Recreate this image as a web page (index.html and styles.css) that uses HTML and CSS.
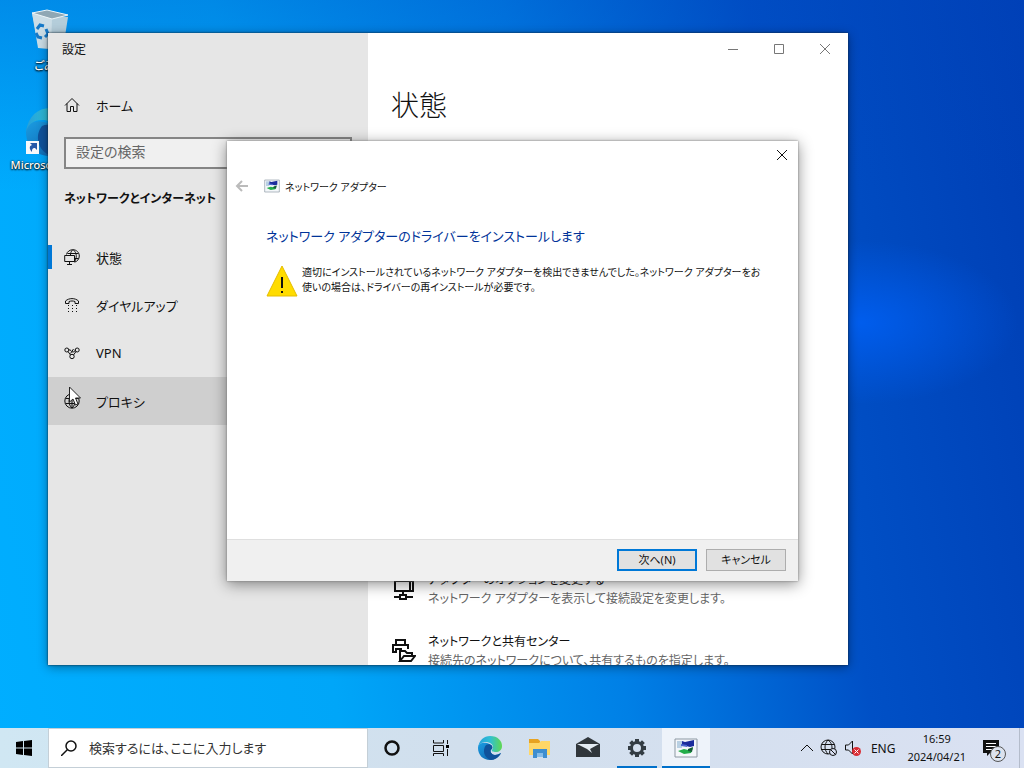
FILE: index.html
```html
<!DOCTYPE html>
<html lang="ja">
<head>
    <meta charset="UTF-8">
    <meta name="viewport" content="width=device-width, initial-scale=1.0">
    <title>設定</title>
    <link rel="stylesheet" href="styles.css">
</head>
<body>
    <svg class="defs" width="0" height="0" aria-hidden="true">
        <defs>
            <linearGradient id="edgeBlue" x1="0" y1="0" x2="1" y2="1">
                <stop offset="0" stop-color="#1b9de2"/>
                <stop offset="1" stop-color="#0c59a4"/>
            </linearGradient>
            <linearGradient id="edgeGreen" x1="0" y1="0" x2="1" y2="0">
                <stop offset="0" stop-color="#259fdc"/>
                <stop offset="0.5" stop-color="#30bfd4"/>
                <stop offset="1" stop-color="#60d850"/>
            </linearGradient>
            <symbol id="edge" viewBox="0 0 24 24">
                <path fill="url(#edgeBlue)" d="M0 12C0 7 5 6 9 7c4 1 6 4 5 6-3 1-1 6 3 6 2 0 4-1 6-2-2 4-6 7-11 7C5 24 0 19 0 12z"/>
                <path fill="#0f529b" d="M8 9c4-2 8 1 6 4-3 1-1 6 3 6 2 0 4-1 6-2-2 4-6 7-10 7C6 22 4 14 8 9z"/>
                <path fill="url(#edgeGreen)" d="M0 12C1 4 6 0 12 0c8 0 12 5 12 10 0 4-3 6-6 6s-5-1-4-2c3-4-1-8-6-8-4 0-7 2-8 6z"/>
            </symbol>
            <symbol id="adapter" viewBox="0 0 24 20">
                <path fill="#f4f7fa" stroke="#8d98a3" d="M1 1h22v18H1z"/>
                <path fill="#b9d0e3" d="M3 3h5v7H3z"/>
                <path fill="#1b2c9c" d="M8 3l3 1 9-2v6l-4 1-8-2z"/>
                <path fill="#4d69cf" d="M7 6l6 1v2l-6-1z"/>
                <path fill="#22ad49" d="M4 13l6-2 4 1 5-2-2 5-7 1z"/>
                <path fill="#145b35" d="M14 11l5-2-1 5-4-1z"/>
            </symbol>
        </defs>
    </svg>

    <main class="desktop">
        <a class="shortcut trash" href="#">
            <svg viewBox="0 0 40 42" width="40" height="42">
                <path fill="#b4cdda" d="M2 4l36 4-5 32-24-1z"/>
                <path fill="#cbdde6" d="M2 4l20 5-1 31-13-1z"/>
                <path fill="#8fa7b4" stroke="#edf5f8" d="M2 4l15-3 21 5-16 4z"/>
                <path fill="none" stroke="#1679c8" stroke-width="3" d="M7 20l3-4 4 1M16 20l2 5-3 3M12 29l-4-1-2-4"/>
            </svg>
            <span>ごみ箱</span>
        </a>
        <a class="shortcut browser" href="#">
            <svg viewBox="0 0 48 48" width="48" height="48">
                <use href="#edge" width="48" height="48"/>
                <path fill="#f7f9fb" d="M0 33h13v13H0z"/>
                <path fill="#2558a8" d="M4 35h7v7l-2-2c-3 0-3 2-3 4-3-3-3-6 0-7z"/>
            </svg>
            <span>Microsoft Edge</span>
        </a>

        <section class="window settings">
            <aside class="sidebar">
                <div class="window-title">設定</div>
                <a class="nav-item home" href="#">
                    <svg viewBox="0 0 16 16"><path d="M1 8.500l7-7 7 7M3 6.500V14.500h3.500V9.500h3v5H13V6.500"/></svg>
                    <span>ホーム</span>
                </a>
                <input class="search" type="text" placeholder="設定の検索" aria-label="設定の検索">
                <h2>ネットワークとインターネット</h2>
                <nav>
                    <a class="nav-item active" href="#">
                        <svg viewBox="0 0 16 16"><path d="M2.500 5.500C3 2.500 6 .7 9 .7c3.500 0 6.300 2.800 6.300 6.300 0 3-2 5.500-4.800 6.200M3.500 4.500h11M10.500 9.500h4M8.500 1C7 2.500 6.500 4 6.500 6M9.500 1c3.500 3 3.500 8 1 12M.7 6.500h9.800v6H.7zM5.500 12.500v3M3 15.500h5"/></svg>
                        <span>状態</span>
                    </a>
                    <a class="nav-item" href="#">
                        <svg viewBox="0 0 16 16"><path d="M1.500 6.500V4C5 .8 11 .8 14.500 4v2.500h-3.500V4.500C9 3.800 7 3.800 5 4.500v2z"/><path class="dots" d="M4 8.500h9M4 11.500h9M4 14.500h9"/></svg>
                        <span>ダイヤルアップ</span>
                    </a>
                    <a class="nav-item" href="#">
                        <svg viewBox="0 0 16 16"><circle cx="2.800" cy="5" r="2"/><circle cx="13.200" cy="5" r="2"/><circle cx="8" cy="11.500" r="2.200"/><path d="M4 6.500l2.500 3.500M12 6.500L9.500 10M4.800 5c2-1 2.500 2 4 2s2.500-1 2.500-2.500M6.500 8.500L9.500 4"/></svg>
                        <span>VPN</span>
                    </a>
                    <a class="nav-item hover" href="#">
                        <svg viewBox="0 0 16 16"><circle cx="8" cy="8" r="7.200"/><path d="M1.500 5.500h13M1.500 10.500h13M8 1v14M8 1C4 4 4 12 8 15M8 1c4 3 4 11 0 14"/></svg>
                        <span>プロキシ</span>
                    </a>
                </nav>
            </aside>
            <div class="content">
                <div class="window-controls">
                    <button aria-label="最小化"><svg viewBox="0 0 12 12"><path d="M1 6.500h10"/></svg></button>
                    <button aria-label="最大化"><svg viewBox="0 0 12 12"><path d="M1.500 1.500h9v9h-9z"/></svg></button>
                    <button aria-label="閉じる"><svg viewBox="0 0 12 12"><path d="M1 1l10 10M11 1L1 11"/></svg></button>
                </div>
                <h1>状態</h1>
                <div class="options">
                    <a class="option" href="#">
                        <svg viewBox="0 0 24 24"><path d="M3 4h15v10H3zM18 4h3v10h-3M11 14v4M2 20h6M14 20h7M8 18h6v4H8z"/></svg>
                        <span><strong>アダプターのオプションを変更する</strong><small>ネットワーク アダプターを表示して接続設定を変更します。</small></span>
                    </a>
                    <a class="option" href="#">
                        <svg viewBox="0 0 24 24"><path d="M4 6V1h9v5M5 13H1V6h15v4M4 13V10h6M8 22V12h5l2 2h5v3M8 22l4-5h11l-4 5z"/></svg>
                        <span><strong>ネットワークと共有センター</strong><small>接続先のネットワークについて、共有するものを指定します。</small></span>
                    </a>
                </div>
            </div>
        </section>

        <section class="window dialog" role="dialog" aria-labelledby="dialogTitle">
            <button class="close" aria-label="閉じる"><svg viewBox="0 0 12 12"><path d="M1 1l10 10M11 1L1 11"/></svg></button>
            <header>
                <button class="back" aria-label="戻る" disabled><svg viewBox="0 0 14 12"><path d="M13 6H2M7 1L2 6l5 5"/></svg></button>
                <svg class="adapter-icon"><use href="#adapter"/></svg>
                <span id="dialogTitle">ネットワーク アダプター</span>
            </header>
            <div class="dialog-body">
                <h2>ネットワーク アダプターのドライバーをインストールします</h2>
                <div class="message">
                    <svg viewBox="0 0 32 32"><path fill="#ffdc00" stroke="#e5bd00" d="M16 1l15 30H1z"/><path fill="#111" d="M15 12h2v11h-2zM15 26h2v2h-2z"/></svg>
                    <p>適切にインストールされているネットワーク アダプターを検出できませんでした。ネットワーク アダプターをお<br>使いの場合は、ドライバーの再インストールが必要です。</p>
                </div>
            </div>
            <footer>
                <button class="btn primary">次へ(N)</button>
                <button class="btn">キャンセル</button>
            </footer>
        </section>

        <svg class="cursor" viewBox="0 0 12 20" width="12" height="20"><path fill="#fff" stroke="#222" d="M.5 1v15l3.500-3 2.500 6 2.500-1-2.500-6h5z"/></svg>
    </main>

    <footer class="taskbar">
        <button class="start" aria-label="スタート"><svg viewBox="0 0 16 16" width="16" height="16"><path d="M0 2l7-1v6.500H0zM8 1l8-1v7.500H8zM0 8.500h7V15l-7-1zM8 8.500h8V16l-8-1z"/></svg></button>
        <label class="task-search">
            <svg viewBox="0 0 16 16" width="16" height="16"><circle cx="10" cy="6" r="5"/><path d="M6.500 9.500L0 16"/></svg>
            <input type="text" placeholder="検索するには、ここに入力します" aria-label="検索">
        </label>
        <div class="apps">
            <button aria-label="Cortana"><svg viewBox="0 0 24 24"><circle class="ring" cx="12" cy="12" r="6.500"/></svg></button>
            <button aria-label="タスク ビュー"><svg viewBox="0 0 24 24"><path class="line" d="M4.500 4v3h10V4M4.500 9.500h10v6h-10zM4.500 20v-2.500h10V20M18.500 4v4M18.500 13v7"/><path d="M17 9h3v3h-3z"/></svg></button>
            <button aria-label="Microsoft Edge"><svg><use href="#edge"/></svg></button>
            <button aria-label="エクスプローラー"><svg viewBox="0 0 24 24"><path fill="#e7a321" d="M2 3h9l2 2v4H2z"/><path fill="#ffd767" d="M2 7h10l2-2h9v14H2z"/><path fill="#3e8ed0" d="M6 13h14v9h-4v-5h-6v5H6z"/><path fill="#86bce8" d="M10 17h6v4h-6z"/></svg></button>
            <button aria-label="メール"><svg viewBox="0 0 24 24"><path fill="#30363b" d="M0 8l12-7 12 7v13H0z"/><path fill="#e3ebf2" d="M1 8h22l-9 5 2 4-5-4z"/></svg></button>
            <button class="open" aria-label="設定"><svg viewBox="0 0 24 24"><circle cx="12" cy="12" r="5.500" fill="none" stroke="#333c43" stroke-width="3"/><path class="gear" d="M12 3v3M12 18v3M3 12h3M18 12h3M5.600 5.600l2.200 2.200M16.200 16.200l2.200 2.200M5.600 18.400l2.200-2.200M16.200 7.800l2.200-2.200"/></svg></button>
            <button class="open current" aria-label="ネットワーク アダプター"><svg><use href="#adapter"/></svg></button>
        </div>
        <div class="tray">
            <button class="chevron" aria-label="隠れているインジケーター"><svg viewBox="0 0 14 16"><path d="M1 11l6-6 6 6"/></svg></button>
            <svg viewBox="0 0 18 18"><circle cx="8" cy="8" r="7"/><path d="M1.500 5.500h13M1 10.500h14M8 1C4 5 4 11 8 15M8 1c4 3 4 6 4 9"/><circle class="badge" cx="13" cy="13" r="3.500"/><path d="M10.500 10.500l5 5"/></svg>
            <svg viewBox="0 0 18 18"><path d="M1.500 6h3l4-4v13l-4-4h-3z"/><circle cx="12.500" cy="12.500" r="4.500" fill="#d92d35" stroke="none"/><path stroke="#fff" d="M10.500 10.500l4 4M14.500 10.500l-4 4"/></svg>
            <span class="lang">ENG</span>
            <time datetime="2024-04-21T16:59">16:59<br>2024/04/21</time>
            <button class="notice" aria-label="通知">
                <svg viewBox="0 0 18 18"><path fill="#111" stroke="none" d="M1 1h16v13H8l-3 3v-3H1z"/><path stroke="#fff" d="M4 4.500h10M4 7.500h10M4 10.500h6"/></svg>
                <span>2</span>
            </button>
        </div>
        <button class="show-desktop" aria-label="デスクトップの表示"></button>
    </footer>
</body>
</html>
```

FILE: styles.css
```css
* {
    box-sizing: border-box;
}
body {
    margin: 0;
    height: 100vh;
    display: grid;
    grid-template-rows: 1fr 40px;
    overflow: hidden;
    font-family: "Noto Sans", "Noto Sans CJK JP", sans-serif;
    font-feature-settings: "palt";
    font-size: 14px;
    color: #111;
    background:
        radial-gradient(ellipse at 84% 42%, rgba(0, 100, 255, 0.7), transparent 13%),
        linear-gradient(to bottom, rgba(0, 70, 190, 0.3), transparent 25%),
        linear-gradient(80deg, #00aeff 0%, #00a6f8 30%, #0080e6 55%, #0050c6 76%, #003eb4 100%);
}
a {
    color: inherit;
    text-decoration: none;
}
button, input {
    font: inherit;
    font-feature-settings: inherit;
    color: inherit;
}
button {
    padding: 0;
    border: 0;
    background: none;
}
h1, h2, p {
    margin: 0;
}
svg {
    flex: none;
}
.defs {
    position: absolute;
}
.desktop {
    position: relative;
    min-height: 0;
}
/* Desktop icons */
.shortcut {
    position: absolute;
    width: 100px;
    left: 0;
    display: flex;
    flex-direction: column;
    align-items: center;
    color: #fff;
    font-size: 11px;
    font-weight: 500;
    line-height: 16px;
    text-shadow: 0 1px 2px #000, 0 0 2px #000;
}
.trash {
    top: 9px;
    gap: 7px;
}
.browser {
    top: 108px;
    gap: 1px;
}
/* Windows */
.window {
    position: absolute;
    background: #fff;
}
.settings {
    inset: 33px 176px 63px 48px;
    display: grid;
    grid-template-columns: 320px 1fr;
    overflow: hidden;
    box-shadow: 0 0 2px #123, 0 2px 10px rgba(0, 0, 0, 0.4);
}
.sidebar {
    background: #e6e6e6;
}
.window-title {
    padding: 8px 14px;
    font-size: 12px;
    line-height: 18px;
}
.nav-item {
    display: flex;
    align-items: center;
    gap: 16px;
    height: 48px;
    padding: 0 16px;
    font-size: 13px;
}
.nav-item svg {
    width: 16px;
    height: 16px;
    fill: none;
    stroke: #111;
}
.nav-item .dots {
    stroke-dasharray: 1 3;
}
.home {
    margin-top: 14px;
}
.search {
    display: block;
    width: 288px;
    height: 32px;
    margin: 8px 16px 0;
    padding: 0 10px 4px;
    border: 2px solid #858585;
    background: #f0f0f0;
}
input::placeholder {
    color: #666;
    opacity: 1;
}
.sidebar h2 {
    margin: 18px 16px 22px;
    font-size: 12px;
    line-height: 24px;
}
.active {
    background: linear-gradient(#0078d7, #0078d7) left center / 4px 24px no-repeat;
}
.hover {
    background: #cfcfcf;
}
.content {
    display: flex;
    flex-direction: column;
    min-width: 0;
}
.window-controls {
    display: flex;
    justify-content: flex-end;
    height: 32px;
}
.window-controls button {
    width: 46px;
}
.window-controls svg, .close svg {
    width: 12px;
    height: 12px;
    fill: none;
    stroke: #777;
}
.content h1 {
    margin: 19px 23px 21px;
    font-size: 28px;
    font-weight: 300;
    line-height: 40px;
    font-family: "Noto Sans CJK JP", sans-serif;
}
.options {
    display: flex;
    flex-direction: column;
    gap: 24px;
    margin-top: 425px;
    padding: 0 24px;
}
.option {
    display: flex;
    align-items: center;
    gap: 12px;
}
.option svg {
    width: 24px;
    height: 24px;
    fill: none;
    stroke: #111;
    stroke-width: 2;
}
.option strong, .option small {
    display: block;
    white-space: nowrap;
    font-size: 12px;
    font-weight: 400;
    line-height: 19px;
}
.option small {
    color: #666;
}
/* Driver wizard */
.dialog {
    inset: 141px 226px 147px 227px;
    display: flex;
    flex-direction: column;
    font-size: 11px;
    box-shadow: 0 0 2px #777, 0 3px 14px rgba(0, 0, 0, 0.45);
}
.close {
    align-self: flex-end;
    width: 32px;
    height: 30px;
}
.close svg {
    stroke: #111;
}
.dialog header {
    display: flex;
    align-items: center;
    height: 30px;
    padding: 0 8px;
    font-size: 10px;
}
.back svg {
    display: block;
    width: 14px;
    height: 12px;
    fill: none;
    stroke: #bbb;
    stroke-width: 2;
}
.adapter-icon {
    width: 16px;
    height: 14px;
    margin: 0 5px 0 15px;
}
.dialog-body {
    flex: 1;
    padding: 22px 16px 0 39px;
}
.dialog h2 {
    font-size: 13px;
    font-weight: 400;
    line-height: 26px;
    color: #003399;
}
.message {
    display: flex;
    gap: 4px;
    margin-top: 16px;
}
.message svg {
    width: 32px;
    height: 32px;
}
.message p {
    font-size: 10px;
    line-height: 15px;
    white-space: nowrap;
}
.dialog footer {
    display: flex;
    justify-content: flex-end;
    gap: 9px;
    padding: 9px 12px 10px;
    border-top: 1px solid #dfdfdf;
    background: #f0f0f0;
}
.btn {
    width: 80px;
    height: 22px;
    border: 1px solid #adadad;
    background: #e1e1e1;
    line-height: 18px;
}
.primary {
    border: 2px solid #0078d7;
}
.cursor {
    position: absolute;
    left: 69px;
    top: 386px;
}
/* Taskbar */
.taskbar {
    display: flex;
    min-width: 0;
    background: linear-gradient(to right, #d0e7f3, #d1dfed 45%, #dae1f2);
}
.start {
    width: 48px;
}
.start svg {
    display: block;
    margin: auto;
}
.task-search {
    display: flex;
    align-items: center;
    gap: 12px;
    width: 320px;
    padding: 0 12px;
    border: 1px solid #c4cfd7;
    background: #fff;
}
.task-search svg {
    fill: none;
    stroke: #111;
    stroke-width: 1.5;
}
.task-search input {
    flex: 1;
    min-width: 0;
    padding: 0;
    border: 0;
    outline: 0;
    background: none;
    font-size: 13px;
}
.task-search input::placeholder {
    color: #333;
}
.apps {
    display: flex;
    gap: 1px;
}
.apps button {
    width: 48px;
}
.apps svg {
    display: block;
    width: 24px;
    height: 24px;
    margin: auto;
}
.ring {
    fill: none;
    stroke: #111;
    stroke-width: 2.5;
}
.line {
    fill: none;
    stroke: #111;
}
.gear {
    stroke: #333c43;
    stroke-width: 4;
}
.apps .open {
    background: linear-gradient(#0070ca, #0070ca) center bottom / 40px 2px no-repeat;
}
.apps .current {
    background-color: #eef3fa;
    background-size: 48px 2px;
}
.tray {
    display: flex;
    align-items: center;
    gap: 6px;
    margin-left: auto;
    padding-right: 19px;
    font-size: 12px;
}
.tray svg {
    width: 18px;
    height: 18px;
    fill: none;
    stroke: #111;
}
.tray .badge {
    fill: #dae1f2;
}
.tray .chevron svg {
    width: 14px;
    display: block;
}
.lang {
    margin: 0 6px 0 3px;
}
time {
    font-size: 11px;
    line-height: 18px;
    text-align: center;
}
.notice {
    position: relative;
    margin-left: 10px;
}
.notice svg {
    display: block;
}
.notice span {
    position: absolute;
    left: 8px;
    top: 7px;
    width: 16px;
    height: 16px;
    border: 1px solid #555;
    border-radius: 50%;
    background: #dce2ee;
    font-size: 11px;
    line-height: 14px;
}
.show-desktop {
    width: 5px;
    border-left: 1px solid #b4bccb;
}
```
